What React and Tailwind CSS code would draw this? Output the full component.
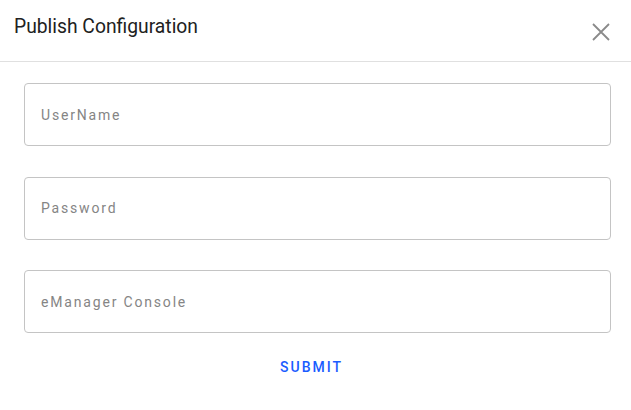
import React from 'react';

const fields = ['UserName', 'Password', 'eManager Console'];

const App = () => {
  return (
    <div className="w-[631px] h-[410px] bg-white font-['Roboto',sans-serif]">
      <div className="h-[62px] flex items-center justify-between pl-[14px] pr-[20px] border-b border-[#e0e0e0]">
        <h2 className="text-[19.3px] text-[#212121] leading-none -mt-[8px]">Publish Configuration</h2>
        <button className="text-[#8a8a8a] -mb-[2px]">
          <svg width="20" height="20" viewBox="0 0 20 20" fill="none" stroke="currentColor" strokeWidth="1.8">
            <path d="M2 2 L18 18 M18 2 L2 18" />
          </svg>
        </button>
      </div>
      <div className="px-[24px] pt-[21px] flex flex-col gap-[30.5px]">
        {fields.map((f) => (
          <input
            key={f}
            type={f === 'Password' ? 'password' : 'text'}
            placeholder={f}
            className="w-[587px] h-[63px] border border-[#c4c4c4] rounded-[4px] px-[16px] text-[14px] tracking-[0.13em] placeholder:text-[#858585] outline-none"
          />
        ))}
      </div>
      <div className="flex justify-center pt-[27px] pr-[8px]">
        <button className="text-[14px] font-medium tracking-[0.14em] text-[#1a5cff] leading-none">SUBMIT</button>
      </div>
    </div>
  );
};

export default App;
